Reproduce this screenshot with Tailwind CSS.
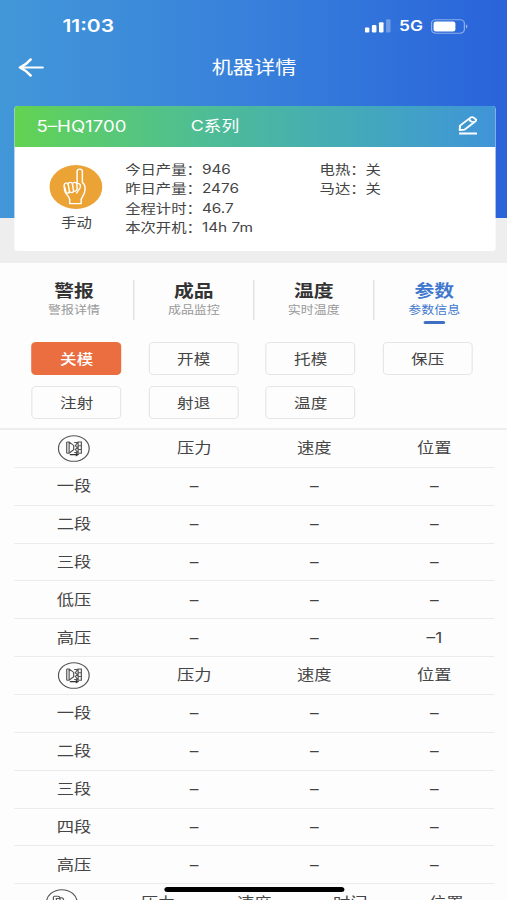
<!DOCTYPE html>
<html lang="zh-CN">
<head>
    <meta charset="UTF-8">
    <meta name="viewport" content="width=device-width, initial-scale=1.0">
    <title>机器详情</title>
    <script src="https://cdn.jsdelivr.net/npm/@tailwindcss/browser@4"></script>
</head>
<body class="bg-[#fdfdfd] overflow-hidden">
    <!-- wide display: the page is laid out at 422.5px and stretched by 1.2 -->
    <div class="relative w-[422.5px] h-[900px] overflow-hidden origin-top-left scale-x-120 bg-[#fdfdfd] text-[#444] font-['Inter','Noto_Sans_CJK_SC',sans-serif]">
        <div class="h-[263px] bg-[#eeeeee]">
            <div class="h-[217.5px] bg-linear-to-r from-[#4297d8] via-[#3880db] to-[#2a63da] text-white">
                <div class="flex items-center justify-between h-[52px] pl-[52px] pr-[31.5px]">
                    <span class="text-[17.5px] font-semibold leading-none">11:03</span>
                    <div class="flex items-center">
                        <svg class="w-[22px] h-[14px]" viewBox="0 0 22 14">
                            <rect x="0" y="8.5" width="3.8" height="5" rx="1" fill="#fff"/>
                            <rect x="5.9" y="6" width="3.8" height="7.5" rx="1" fill="#fff"/>
                            <rect x="11.8" y="3.2" width="3.8" height="10.3" rx="1" fill="#fff"/>
                            <rect x="17.7" y="0.3" width="3.8" height="13.2" rx="1" fill="#fff" fill-opacity=".3"/>
                        </svg>
                        <span class="ml-[7px] text-[14.5px] font-semibold leading-none">5G</span>
                        <svg class="ml-[6.5px] w-[32px] h-[15px]" viewBox="0 0 32 15">
                            <rect x="0.6" y="0.8" width="27.4" height="13.4" rx="3.6" fill="none" stroke="#fff" stroke-opacity=".45" stroke-width="1.1"/>
                            <rect x="2.3" y="2.6" width="18.2" height="9.8" rx="2" fill="#fff"/>
                            <path d="M29.3 5.6c1.6.5 1.6 3.4 0 3.9z" fill="#fff" fill-opacity=".5"/>
                        </svg>
                    </div>
                </div>
                <div class="grid grid-cols-3 items-center h-[32px] pl-[15px] pr-[14px]">
                    <svg class="w-[22px] h-[20px]" viewBox="0 0 22 20" fill="none" stroke="#fff" stroke-width="2.2" stroke-linecap="round" stroke-linejoin="round">
                        <path d="M20.5 9.5H1.6M10.5 1.5Q7 6.5 1.6 9.5Q7 12.5 10.5 17.5"/>
                    </svg>
                    <h1 class="text-[17.7px] text-center leading-none whitespace-nowrap">机器详情</h1>
                </div>
                <div class="mt-[22px] ml-[11.7px] mr-[10px] h-[145px] rounded-[3px] overflow-hidden bg-white text-[#444]">
                    <div class="flex items-center h-[41px] pl-[18.7px] pr-[15px] bg-linear-to-r from-[#62d34f] to-[#4094d8] text-white">
                        <span class="w-[128.5px] text-[15.5px]">5–HQ1700</span>
                        <span class="flex-1 text-[14.8px]">C系列</span>
                        <svg class="w-[16px] h-[19px] -mt-[2px]" viewBox="0 0 16 19" fill="none" stroke="#fff" stroke-width="1.7" stroke-linejoin="round">
                            <path d="M1.4 9.7L10.2 1.5Q11.5.5 12.7 1.6L14.3 3.1Q15.2 4.2 14.1 5.3L5.2 13.6L1 14.2ZM9.2 2.7Q9 5.6 12.9 6.2"/>
                            <path d="M0.6 17.5H15.5" stroke-width="2"/>
                        </svg>
                    </div>
                    <div class="flex pt-[13px]">
                        <div class="flex flex-col items-center w-[44px] ml-[30px] mt-[5px]">
                            <svg class="w-[44.5px] h-[44px]" viewBox="0 0 44 44">
                                <circle cx="22" cy="22" r="22" fill="#eca336"/>
                                <g fill="none" stroke="#fff" stroke-width="1.2" stroke-linecap="round" stroke-linejoin="round">
                                    <path d="M23 18.5V6.5C23 3.4 27.4 3.4 27.4 6.5V17.5C30 19.5 30 23 29.3 27C28.6 30 27.2 31.6 26.4 34.5M16.8 34.5C16.5 31 13 29 12.6 25.5L12.3 21"/>
                                    <path d="M16.8 34.5V38.6H26.4V34.5"/>
                                    <path d="M12.3 21C12 17.5 15 17 15.6 19.5L16.6 26C16.9 28.6 14.2 29 13.6 26.5Z"/>
                                    <path d="M15.6 19.5C15.5 16.6 18.8 16.6 19.2 19.3L20 25.5C20.2 28 17.3 28.4 16.6 26"/>
                                    <path d="M19.2 19.3C19.1 16.8 22.6 16.8 22.8 19.3L23 23.5C23 26 20.4 27.4 20 25"/>
                                    <path d="M23 18.5C25.5 18 26.4 20.5 25.4 23L22.6 28"/>
                                </g>
                            </svg>
                            <span class="mt-[5px] text-[12.8px] leading-[18px] whitespace-nowrap">手动</span>
                        </div>
                        <div class="ml-[18.6px] w-[162px] text-[12.8px] leading-[19.4px] whitespace-nowrap">
                            <p>今日产量：946</p>
                            <p>昨日产量：2476</p>
                            <p>全程计时：46.7</p>
                            <p>本次开机：14h 7m</p>
                        </div>
                        <div class="text-[12.8px] leading-[19.4px] whitespace-nowrap">
                            <p>电热：关</p>
                            <p>马达：关</p>
                        </div>
                    </div>
                </div>
            </div>
        </div>

        <div class="grid grid-cols-4 mt-[17px] ml-[12.2px] mr-[10.7px] h-[46px] text-center">
            <div class="h-[40px] border-r border-[#ddd]">
                <p class="pt-px text-[16.5px] leading-[21px] font-bold text-[#333]">警报</p>
                <p class="text-[10.8px] leading-[18px] text-[#999]">警报详情</p>
            </div>
            <div class="h-[40px] border-r border-[#ddd]">
                <p class="pt-px text-[16.5px] leading-[21px] font-bold text-[#333]">成品</p>
                <p class="text-[10.8px] leading-[18px] text-[#999]">成品监控</p>
            </div>
            <div class="h-[40px] border-r border-[#ddd]">
                <p class="pt-px text-[16.5px] leading-[21px] font-bold text-[#333]">温度</p>
                <p class="text-[10.8px] leading-[18px] text-[#999]">实时温度</p>
            </div>
            <div class="flex flex-col items-center text-[#3f78cc]">
                <p class="pt-px text-[16.5px] leading-[21px] font-bold">参数</p>
                <p class="text-[10.8px] leading-[18px]">参数信息</p>
                <div class="mt-px w-[18.5px] h-[3px] rounded-full bg-[#3f6fc0]"></div>
            </div>
        </div>

        <div class="grid grid-cols-4 gap-x-[22.5px] gap-y-[10.5px] mt-[16px] ml-[26.4px] w-[367.5px] text-[13.8px] text-center leading-[32px]">
            <div class="h-[33px] rounded-[4px] bg-[#eb6e40] text-white font-medium leading-[34px]">关模</div>
            <div class="h-[33px] rounded-[4px] border border-[#e6e6e6]">开模</div>
            <div class="h-[33px] rounded-[4px] border border-[#e6e6e6]">托模</div>
            <div class="h-[33px] rounded-[4px] border border-[#e6e6e6]">保压</div>
            <div class="h-[33px] rounded-[4px] border border-[#e6e6e6]">注射</div>
            <div class="h-[33px] rounded-[4px] border border-[#e6e6e6]">射退</div>
            <div class="h-[33px] rounded-[4px] border border-[#e6e6e6]">温度</div>
        </div>

        <div id="tables" class="mt-[9.5px] border-t-2 border-[#eeeeee] text-[14.4px] text-center"></div>

        <div class="absolute left-[136.5px] top-[887px] w-[150.5px] h-[5px] rounded-full bg-black"></div>
    </div>

    <script>
        const clampIcon = `
            <svg class="w-[27px] h-[27px]" viewBox="0 0 27 27" fill="none" stroke="#555">
                <circle cx="13.5" cy="13.5" r="12.8" stroke-width="1"/>
                <path d="M7.6 7V18.2M7.6 7H9.6L13.4 10.5V14.7L9.6 18.2H7.6M9.6 7V18.2M13.8 7.5H16.6L14.8 10.8L16.6 12.6L14.8 14.4L16.6 17.6H13.8M17.1 7H19.8V18.2H17.1ZM17.1 10.8H19.8M17.1 14.4H19.8" stroke-width="1"/>
                <path d="M10.2 19.6H16.2" stroke="#333" stroke-width="1.1"/>
                <path d="M15.2 17.8L18 19.6L15.2 21.4Z" fill="#333" stroke="none"/>
            </svg>`;
        const injectIcon = `
            <svg class="w-[27px] h-[27px]" viewBox="0 0 27 27" fill="none" stroke="#555">
                <circle cx="13.5" cy="13.5" r="12.8" stroke-width="1"/>
                <path d="M6.5 11V8.2Q6.5 7.2 7.5 7.2H10Q12 7.2 12 9.5V12M9 12V9.5H12M12 8.5Q15 8.5 15 11V14" stroke-width="1"/>
            </svg>`;

        const tables = [
            { icon: clampIcon, head: ['压力', '速度', '位置'], rows: [
                ['一段', '–', '–', '–'],
                ['二段', '–', '–', '–'],
                ['三段', '–', '–', '–'],
                ['低压', '–', '–', '–'],
                ['高压', '–', '–', '–1']
            ] },
            { icon: clampIcon, head: ['压力', '速度', '位置'], rows: [
                ['一段', '–', '–', '–'],
                ['二段', '–', '–', '–'],
                ['三段', '–', '–', '–'],
                ['四段', '–', '–', '–'],
                ['高压', '–', '–', '–']
            ] },
            { icon: injectIcon, head: ['压力', '速度', '时间', '位置'], rows: [] }
        ];

        function addRow(cells) {
            const row = document.createElement('div');
            row.className = 'flex items-center ml-[11.7px] mr-[10.5px] h-[37.87px] border-b-[1.5px] border-[#ebebeb]';
            row.innerHTML = cells.map(c => `<div class="flex-1 flex justify-center leading-none">${c}</div>`).join('');
            document.getElementById('tables').appendChild(row);
        }

        tables.forEach(t => {
            addRow([t.icon, ...t.head]);
            t.rows.forEach(addRow);
        });
    </script>
</body>
</html>
